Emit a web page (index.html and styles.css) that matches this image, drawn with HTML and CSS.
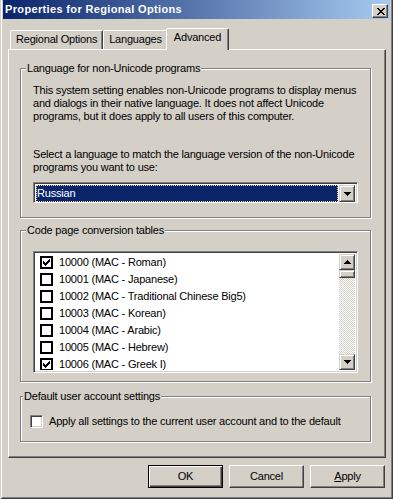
FILE: index.html
```html
<!doctype html>
<html lang="en">
<head>
  <meta charset="utf-8" />
  <meta name="viewport" content="width=device-width,initial-scale=1" />
  <title>Properties for Regional Options</title>
  <link rel="stylesheet" href="styles.css">
</head>
<body>
<div class="window">

  <div class="caption">
    <span class="caption-title">Properties for Regional Options</span>
    <span class="caption-close">
      <svg width="8" height="7" viewBox="0 0 8 7" shape-rendering="crispEdges"><path d="M0 0h2v1H0z M6 0h2v1H6z M1 1h2v1H1z M5 1h2v1H5z M2 2h4v1H2z M3 3h2v1H3z M2 4h4v1H2z M1 5h2v1H1z M5 5h2v1H5z M0 6h2v1H0z M6 6h2v1H6z" fill="#000"/></svg>
    </span>
  </div>

  <div class="dialog">
    <div class="tabs">
      <div class="tab">Regional Options</div>
      <div class="tab">Languages</div>
      <div class="tab tab-active">Advanced</div>
    </div>

    <div class="panel">

      <fieldset class="group group-lang">
        <legend>Language for non-Unicode programs</legend>
        <p>This system setting enables non-Unicode programs to display menus<br>and dialogs in their native language. It does not affect Unicode<br>programs, but it does apply to all users of this computer.</p>
        <p class="gap">Select a language to match the language version of the non-Unicode<br>programs you want to use:</p>
        <div class="combo">
          <div class="combo-value"><span>Russian</span></div>
          <div class="raised combo-btn">
            <svg width="7" height="4" viewBox="0 0 7 4" shape-rendering="crispEdges"><path d="M0 0h7v1h-1v1h-1v1h-1v1h-1v-1h-1v-1h-1v-1h-1z" fill="#000"/></svg>
          </div>
        </div>
      </fieldset>

      <fieldset class="group group-codepages">
        <legend>Code page conversion tables</legend>
        <div class="listbox">
          <ul class="list">
            <li><span class="check check-flat checked"></span>10000 (MAC - Roman)</li>
            <li><span class="check check-flat"></span>10001 (MAC - Japanese)</li>
            <li><span class="check check-flat"></span>10002 (MAC - Traditional Chinese Big5)</li>
            <li><span class="check check-flat"></span>10003 (MAC - Korean)</li>
            <li><span class="check check-flat"></span>10004 (MAC - Arabic)</li>
            <li><span class="check check-flat"></span>10005 (MAC - Hebrew)</li>
            <li><span class="check check-flat checked"></span>10006 (MAC - Greek I)</li>
          </ul>
          <div class="scrollbar">
            <div class="raised sb-btn">
              <svg width="7" height="4" viewBox="0 0 7 4" shape-rendering="crispEdges"><path d="M3 0h1v1h1v1h1v1h1v1h-7v-1h1v-1h1v-1h1z" fill="#000"/></svg>
            </div>
            <div class="sb-track"><div class="raised sb-thumb"></div></div>
            <div class="raised sb-btn">
              <svg width="7" height="4" viewBox="0 0 7 4" shape-rendering="crispEdges"><path d="M0 0h7v1h-1v1h-1v1h-1v1h-1v-1h-1v-1h-1v-1h-1z" fill="#000"/></svg>
            </div>
          </div>
        </div>
      </fieldset>

      <fieldset class="group group-default">
        <legend>Default user account settings</legend>
        <div class="checkrow"><span class="check check-3d"></span>Apply all settings to the current user account and to the default</div>
      </fieldset>

    </div>

    <div class="buttons">
      <button class="btn btn-default">OK</button>
      <button class="btn">Cancel</button>
      <button class="btn"><u>A</u>pply</button>
    </div>
  </div>

</div>
</body>
</html>
```

FILE: styles.css
```css
:root{
  --face:#d4d0c8;
  --shadow:#808080;
  --dark:#404040;
  --light:#fff;
  --navy:#0a246a;
}

*{box-sizing:border-box;margin:0;padding:0}

body{
  background:var(--face);
  font-family:"Liberation Sans",Arial,sans-serif;
  font-size:11px;
  line-height:13px;
  letter-spacing:-0.2px;
  color:#000;
}

.window{
  width:393px;
  height:499px;
  padding:0 3px 3px 3px;
  background:var(--face);
  box-shadow:
    inset 1px 0 var(--face),
    inset -1px -1px var(--dark),
    inset 2px 0 var(--light),
    inset -2px -2px var(--shadow);
  display:flex;
  flex-direction:column;
}

/* title bar */
.caption{
  height:19px;
  flex:none;
  display:flex;
  align-items:flex-start;
  justify-content:space-between;
  padding:0 2px 0 2px;
  background:linear-gradient(90deg,#0a246a,#a6caf0);
}
.caption-title{
  color:#fff;
  font-weight:700;
  letter-spacing:0.35px;
  padding-top:3px;
}
.caption-close{
  margin-top:4px;
  width:16px;height:14px;
  display:flex;align-items:center;justify-content:center;
  background:var(--face);
  border:1px solid;
  border-color:var(--light) var(--dark) var(--dark) var(--light);
  box-shadow:inset -1px -1px var(--shadow);
}
.caption-close svg{margin-top:1px;margin-left:1px}

.raised{
  background:var(--face);
  border:1px solid;
  border-color:var(--face) var(--dark) var(--dark) var(--face);
  box-shadow:inset 1px 1px var(--light),inset -1px -1px var(--shadow);
}

.dialog{
  flex:1;
  padding:9px 4px 0 5px;
  display:flex;
  flex-direction:column;
}

/* tabs */
.tabs{
  height:21px;
  flex:none;
  display:flex;
  align-items:flex-end;
  padding-left:2px;
}
.tab{
  position:relative;
  height:19px;
  padding:2px 5px 3px 5px;
  border:1px solid;
  border-bottom:none;
  border-color:var(--light) var(--dark) transparent var(--light);
  box-shadow:inset -1px 0 var(--shadow);
  border-radius:2px 2px 0 0;
  background:var(--face);
  white-space:nowrap;
}
.tab-active{
  z-index:1;
  height:22px;
  margin:0 -2px -1px -2px;
  padding:2px 7px 6px 7px;
}

.panel{
  height:409px;
  flex:none;
  padding:12px 12px 0 11px;
  border:1px solid;
  border-color:var(--light) var(--dark) var(--dark) var(--light);
  box-shadow:inset -1px -1px var(--shadow);
}

/* group boxes */
.group{
  width:351px;
  border:1px solid var(--shadow);
  box-shadow:1px 1px 0 var(--light),inset 1px 1px 0 var(--light);
  padding:9px 12px 14px 12px;
  min-inline-size:0;
}
.group legend{
  margin-left:-7px;
  padding:0 1px;
  background:var(--face);
}
.group p{white-space:nowrap}
.group-lang .gap{margin-top:25px}

.group-codepages{
  margin-top:6px;
  padding:14px 12px 8px 12px;
}
.group-default{
  margin-top:8px;
  padding:12px 9px 13px 9px;
}

/* combo box */
.combo{
  margin-top:8px;
  height:21px;
  display:flex;
  padding:2px;
  background:#fff;
  border:1px solid;
  border-color:var(--shadow) var(--light) var(--light) var(--shadow);
  box-shadow:inset 1px 1px var(--dark),inset -1px -1px var(--face);
}
.combo-value{
  flex:1;
  margin-right:1px;
}
.combo-value span{
  display:block;
  height:17px;
  padding:1px 0 0 0;
  background:var(--navy);
  color:#fff;
  border:1px dotted #f5db95;
}
.combo-btn{
  width:16px;
  height:17px;
  display:flex;align-items:center;justify-content:center;
}
.combo-btn svg{margin-top:1px}

/* list box */
.listbox{
  height:122px;
  display:flex;
  padding:2px;
  background:#fff;
  border:1px solid;
  border-color:var(--shadow) var(--light) var(--light) var(--shadow);
  box-shadow:inset 1px 1px var(--dark),inset -1px -1px var(--face);
  overflow:hidden;
}
.list{
  flex:1;
  list-style:none;
  overflow:hidden;
}
.list li{
  height:17px;
  display:flex;
  align-items:center;
  padding-left:4px;
  white-space:nowrap;
}
.check{
  flex:none;
  width:13px;height:13px;
  margin-right:6px;
  background:#fff;
}
.check-flat{
  border:2px solid #000;
}
.check-3d{
  border:1px solid;
  border-color:var(--shadow) var(--light) var(--light) var(--shadow);
  box-shadow:inset 1px 1px var(--dark),inset -1px -1px var(--face);
}
.checked{
  background:#fff url("data:image/svg+xml,%3Csvg xmlns='http://www.w3.org/2000/svg' width='7' height='7' shape-rendering='crispEdges'%3E%3Cpath d='M0 2h1v1h1v1h1v-1h1v-1h1v-1h1v-1h1v3h-1v1h-1v1h-1v1h-1v1h-1v-1h-1v-1h-1z'/%3E%3C/svg%3E") center/7px 7px no-repeat;
}

.scrollbar{
  width:16px;
  display:flex;
  flex-direction:column;
}
.sb-btn{
  width:16px;height:16px;
  display:flex;align-items:center;justify-content:center;
}
.sb-track{
  flex:1;
  background:repeating-conic-gradient(var(--face) 0 25%,#fff 0 50%) 0 0/2px 2px;
}
.sb-thumb{height:8px}

.checkrow{
  display:flex;
  align-items:center;
  white-space:nowrap;
}

/* buttons */
.buttons{
  display:flex;
  justify-content:flex-end;
  gap:6px;
  margin-top:7px;
  padding-right:1px;
}
.btn{
  width:75px;height:23px;
  font:inherit;
  letter-spacing:inherit;
  color:#000;
  border:1px solid;
  border-color:var(--light) var(--dark) var(--dark) var(--light);
  box-shadow:inset -1px -1px var(--shadow);
  background:var(--face);
}
.btn-default{
  border-color:#000;
  box-shadow:inset 1px 1px var(--light),inset -1px -1px var(--dark),inset -2px -2px var(--shadow);
}
```
